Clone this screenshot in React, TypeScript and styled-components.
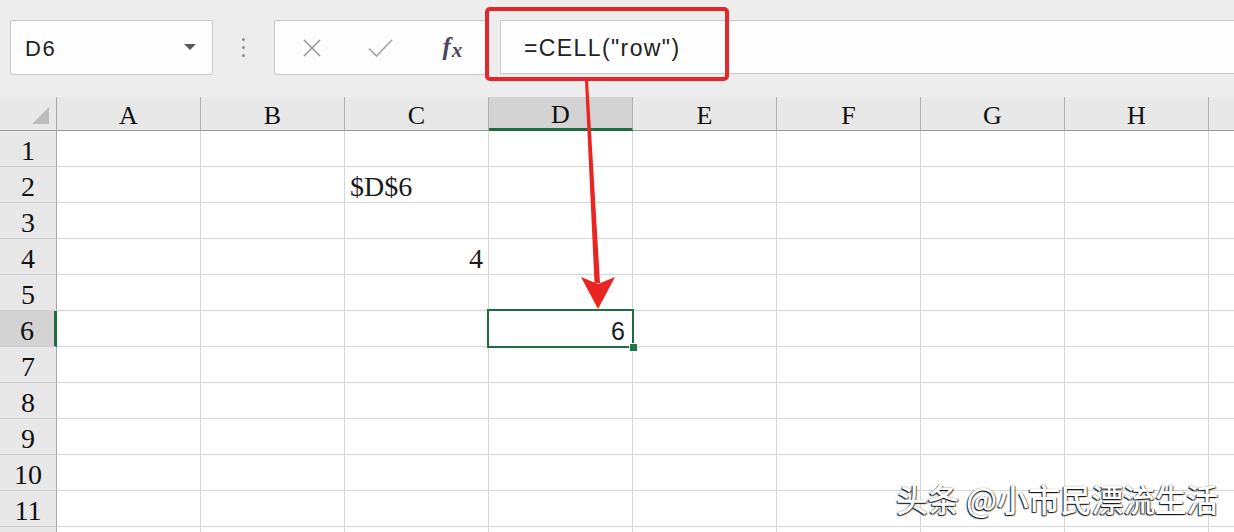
import styled, { createGlobalStyle } from "styled-components";

const GlobalStyle = createGlobalStyle`
  html, body {
    margin: 0;
    padding: 0;
    background: #fff;
  }
  body {
    font-family: "Liberation Sans", Arial, sans-serif;
  }
`;

const COLUMNS = ["A", "B", "C", "D", "E", "F", "G", "H", "I"];
const ROW_COUNT = 12;
const ACTIVE_COL = "D";
const ACTIVE_ROW = 6;

type CellValue = { text: string; align: "left" | "right"; sans?: boolean };

const values: Record<string, CellValue> = {
  C2: { text: "$D$6", align: "left" },
  C4: { text: "4", align: "right" },
  D6: { text: "6", align: "right", sans: true },
};

const App = () => {
  const rows = Array.from({ length: ROW_COUNT }, (_, i) => i + 1);
  return (
    <Page>
      <GlobalStyle />
      <Toolbar>
        <NameBox>
          <NameText>D6</NameText>
          <DropArrow />
        </NameBox>
        <Grip>
          <Dot />
          <Dot />
          <Dot />
        </Grip>
        <FuncBox>
          <IconSlot>
            <svg width="18" height="18" viewBox="0 0 18 18">
              <path d="M1 1 L17 17 M17 1 L1 17" stroke="#8c8c8c" strokeWidth="1.3" fill="none" />
            </svg>
          </IconSlot>
          <IconSlot>
            <svg width="25" height="18" viewBox="0 0 25 18">
              <path d="M1 9.5 L8.5 17 L24 1" stroke="#a0a0a0" strokeWidth="1.5" fill="none" />
            </svg>
          </IconSlot>
          <IconSlot>
            <Fx>
              f<sub>x</sub>
            </Fx>
          </IconSlot>
        </FuncBox>
        <FormulaInput>
          <FormulaText>=CELL("row")</FormulaText>
        </FormulaInput>
      </Toolbar>

      <Sheet>
        <HeaderRow>
          <Corner>
            <CornerMark />
          </Corner>
          {COLUMNS.map((c) => (
            <ColHeader key={c} active={c === ACTIVE_COL}>
              {c}
            </ColHeader>
          ))}
        </HeaderRow>
        {rows.map((r) => (
          <Row key={r}>
            <RowHeader active={r === ACTIVE_ROW}>{r}</RowHeader>
            {COLUMNS.map((c) => {
              const v = values[`${c}${r}`];
              const selected = c === ACTIVE_COL && r === ACTIVE_ROW;
              return (
                <Cell key={c} align={v ? v.align : "left"}>
                  {v && <CellText sans={v.sans}>{v.text}</CellText>}
                  {selected && (
                    <Selection>
                      <FillHandle />
                    </Selection>
                  )}
                </Cell>
              );
            })}
          </Row>
        ))}
      </Sheet>

      <Callout />
      <Arrow width="1234" height="532" viewBox="0 0 1234 532">
        <polygon points="585,80 588,80 600,283 594.5,283" fill="#ea2420" />
        <polygon points="581,277 598,284 615,277 598,309" fill="#ea2420" />
      </Arrow>
      <Watermark>头条 @小市民漂流生活</Watermark>
    </Page>
  );
};

const Page = styled.div`
  position: relative;
  width: 1234px;
  height: 532px;
  overflow: hidden;
  background: #fff;
`;

const Toolbar = styled.div`
  display: flex;
  align-items: flex-start;
  box-sizing: border-box;
  height: 97px;
  padding: 20px 0 0 10px;
  background: #ededed;
`;

const NameBox = styled.div`
  display: flex;
  align-items: center;
  justify-content: space-between;
  box-sizing: border-box;
  width: 203px;
  height: 55px;
  padding: 0 16px 0 14px;
  background: #fdfdfd;
  border: 1px solid #c9c9c9;
  border-radius: 2px;
`;

const NameText = styled.span`
  font-size: 22px;
  letter-spacing: 1.5px;
  color: #222;
  padding-top: 2px;
`;

const DropArrow = styled.span`
  width: 0;
  height: 0;
  border-left: 6px solid transparent;
  border-right: 6px solid transparent;
  border-top: 6px solid #5a5a5a;
  margin-bottom: 2px;
`;

const Grip = styled.div`
  display: flex;
  flex-direction: column;
  align-items: center;
  justify-content: center;
  gap: 5px;
  width: 61px;
  height: 55px;
`;

const Dot = styled.span`
  width: 3px;
  height: 3px;
  border-radius: 50%;
  background: #8c8c8c;
`;

const FuncBox = styled.div`
  display: flex;
  align-items: center;
  box-sizing: border-box;
  width: 212px;
  height: 55px;
  padding-left: 2px;
  background: #fdfdfd;
  border: 1px solid #c9c9c9;
  border-radius: 2px;
`;

const IconSlot = styled.div`
  display: flex;
  align-items: center;
  justify-content: center;
  width: 72px;
  height: 100%;
`;

const Fx = styled.span`
  font-family: "Liberation Serif", "Times New Roman", serif;
  font-style: italic;
  font-weight: bold;
  font-size: 25px;
  color: #4a4560;
  margin-left: 4px;
  sub {
    font-size: 21px;
    vertical-align: -2px;
    margin-left: 1px;
  }
`;

const FormulaInput = styled.div`
  display: flex;
  align-items: center;
  box-sizing: border-box;
  flex: 1;
  height: 54px;
  margin-left: 14px;
  padding-left: 23px;
  background: #fefefe;
  border: 1px solid #c9c9c9;
  border-right: none;
`;

const FormulaText = styled.span`
  font-size: 23px;
  letter-spacing: 1.4px;
  color: #222;
  padding-top: 2px;
`;

const Sheet = styled.div`
  display: flex;
  flex-direction: column;
`;

const HeaderRow = styled.div`
  display: flex;
  height: 34px;
  background: #e8e8e8;
`;

const Corner = styled.div`
  position: relative;
  box-sizing: border-box;
  flex: 0 0 57px;
  border-right: 1px solid #a9a9a9;
  border-bottom: 1px solid #9c9c9c;
`;

const CornerMark = styled.span`
  position: absolute;
  right: 7px;
  bottom: 6px;
  width: 0;
  height: 0;
  border-left: 17px solid transparent;
  border-bottom: 17px solid #bcbcbc;
`;

const ColHeader = styled.div<{ active?: boolean }>`
  display: flex;
  align-items: center;
  justify-content: center;
  box-sizing: border-box;
  flex: 0 0 144px;
  padding-top: 5px;
  font-family: "Liberation Serif", "Times New Roman", serif;
  font-size: 26px;
  color: #111;
  background: ${(p) => (p.active ? "#d3d3d3" : "transparent")};
  border-right: 1px solid #b0b0b0;
  border-bottom: ${(p) => (p.active ? "3px solid #1f6b43" : "1px solid #9c9c9c")};
`;

const Row = styled.div`
  display: flex;
  height: 36px;
`;

const RowHeader = styled.div<{ active?: boolean }>`
  display: flex;
  align-items: center;
  justify-content: center;
  box-sizing: border-box;
  flex: 0 0 57px;
  padding-top: 5px;
  font-family: "Liberation Serif", "Times New Roman", serif;
  font-size: 28px;
  color: #111;
  background: ${(p) => (p.active ? "#d3d3d3" : "#e8e8e8")};
  border-right: ${(p) => (p.active ? "3px solid #1f6b43" : "1px solid #a9a9a9")};
  border-bottom: 1px solid #cfcfcf;
`;

const Cell = styled.div<{ align: "left" | "right" }>`
  position: relative;
  display: flex;
  align-items: center;
  justify-content: ${(p) => (p.align === "right" ? "flex-end" : "flex-start")};
  box-sizing: border-box;
  flex: 0 0 144px;
  padding: 5px 5px 0 5px;
  border-right: 1px solid #d6d6d6;
  border-bottom: 1px solid #d6d6d6;
`;

const CellText = styled.span<{ sans?: boolean }>`
  font-family: ${(p) =>
    p.sans ? `"Liberation Sans", Arial, sans-serif` : `"Liberation Serif", "Times New Roman", serif`};
  font-size: ${(p) => (p.sans ? "25px" : "28px")};
  color: #1a1a1a;
  margin-right: ${(p) => (p.sans ? "2px" : "0")};
`;

const Selection = styled.div`
  position: absolute;
  z-index: 2;
  top: -2px;
  left: -2px;
  right: -2px;
  bottom: -2px;
  border: 2px solid #1f6b43;
`;

const FillHandle = styled.span`
  position: absolute;
  right: -6px;
  bottom: -6px;
  box-sizing: border-box;
  width: 9px;
  height: 9px;
  background: #1f7a45;
  border: 1px solid #fff;
`;

const Callout = styled.div`
  position: absolute;
  left: 485px;
  top: 7px;
  box-sizing: border-box;
  width: 244px;
  height: 74px;
  border: 4px solid #e6262a;
  border-radius: 5px;
`;

const Arrow = styled.svg`
  position: absolute;
  left: 0;
  top: 0;
  pointer-events: none;
`;

const Watermark = styled.div`
  position: absolute;
  left: 896px;
  top: 475px;
  font-family: "Noto Sans CJK SC", "Noto Sans", sans-serif;
  font-size: 32px;
  font-weight: 500;
  letter-spacing: -0.4px;
  color: #fff;
  white-space: nowrap;
  text-shadow: -1px 1px 1px rgba(0, 0, 0, 0.85), 1px 1px 1px rgba(0, 0, 0, 0.6),
    0 0 1px rgba(0, 0, 0, 0.6);
`;

export default App;
